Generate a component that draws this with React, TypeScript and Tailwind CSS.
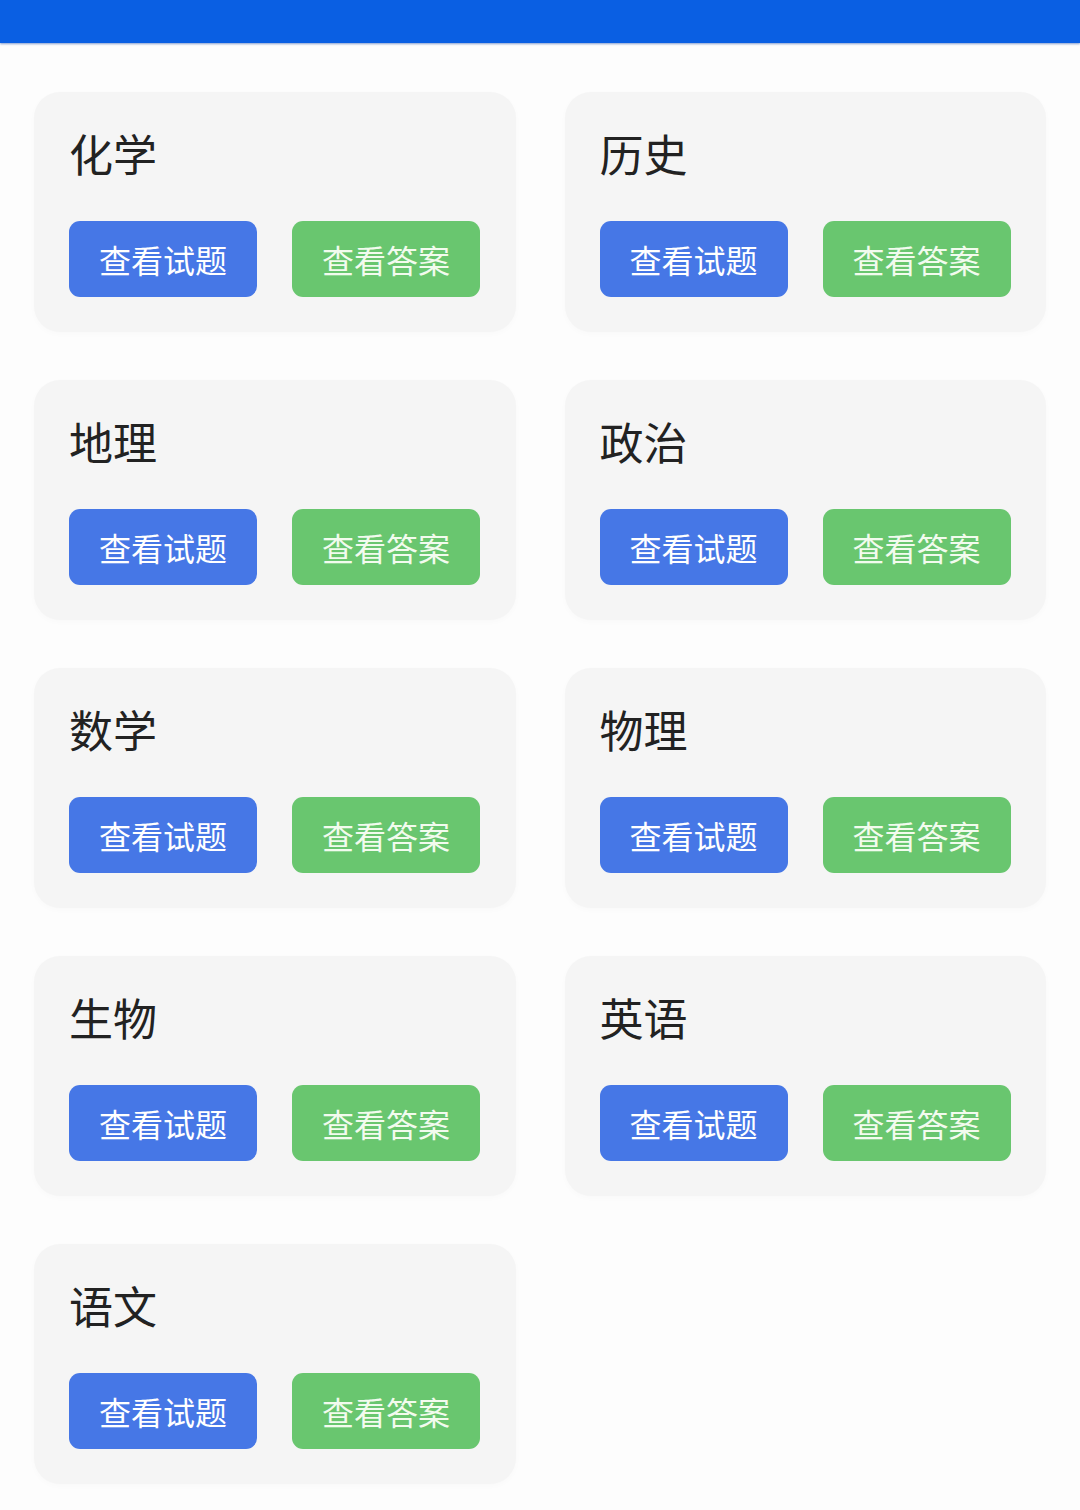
const subjects = ["化学", "历史", "地理", "政治", "数学", "物理", "生物", "英语", "语文"];

function SubjectCard({ name }: { name: string }) {
  return (
    <div className="h-[240px] rounded-[26px] bg-[#f5f5f5] px-[35px] pt-[39px] shadow-[0_2px_6px_rgba(0,0,0,0.02)]">
      <h2 className="text-[44px] leading-[44px] font-normal text-[#222222]">{name}</h2>
      <div className="mt-[46px] flex gap-[35px]">
        <button className="h-[76px] w-[188px] rounded-[11px] bg-[#4677e6] text-[32px] leading-none text-white">
          查看试题
        </button>
        <button className="h-[76px] w-[188px] rounded-[11px] bg-[#69c66f] text-[32px] leading-none text-[#f2fbee]">
          查看答案
        </button>
      </div>
    </div>
  );
}

export default function App() {
  return (
    <div
      className="min-h-[1510px] bg-[#fdfdfd]"
      style={{ fontFamily: '"Noto Sans CJK SC", "Noto Sans", sans-serif' }}
    >
      <div className="h-[43px] bg-[#0a5fe3] shadow-[0_1px_2px_rgba(10,60,160,0.5)]" />
      <div className="grid grid-cols-2 gap-x-[49px] gap-y-[48px] px-[34px] pt-[49px]">
        {subjects.map((s) => (
          <SubjectCard key={s} name={s} />
        ))}
      </div>
    </div>
  );
}
